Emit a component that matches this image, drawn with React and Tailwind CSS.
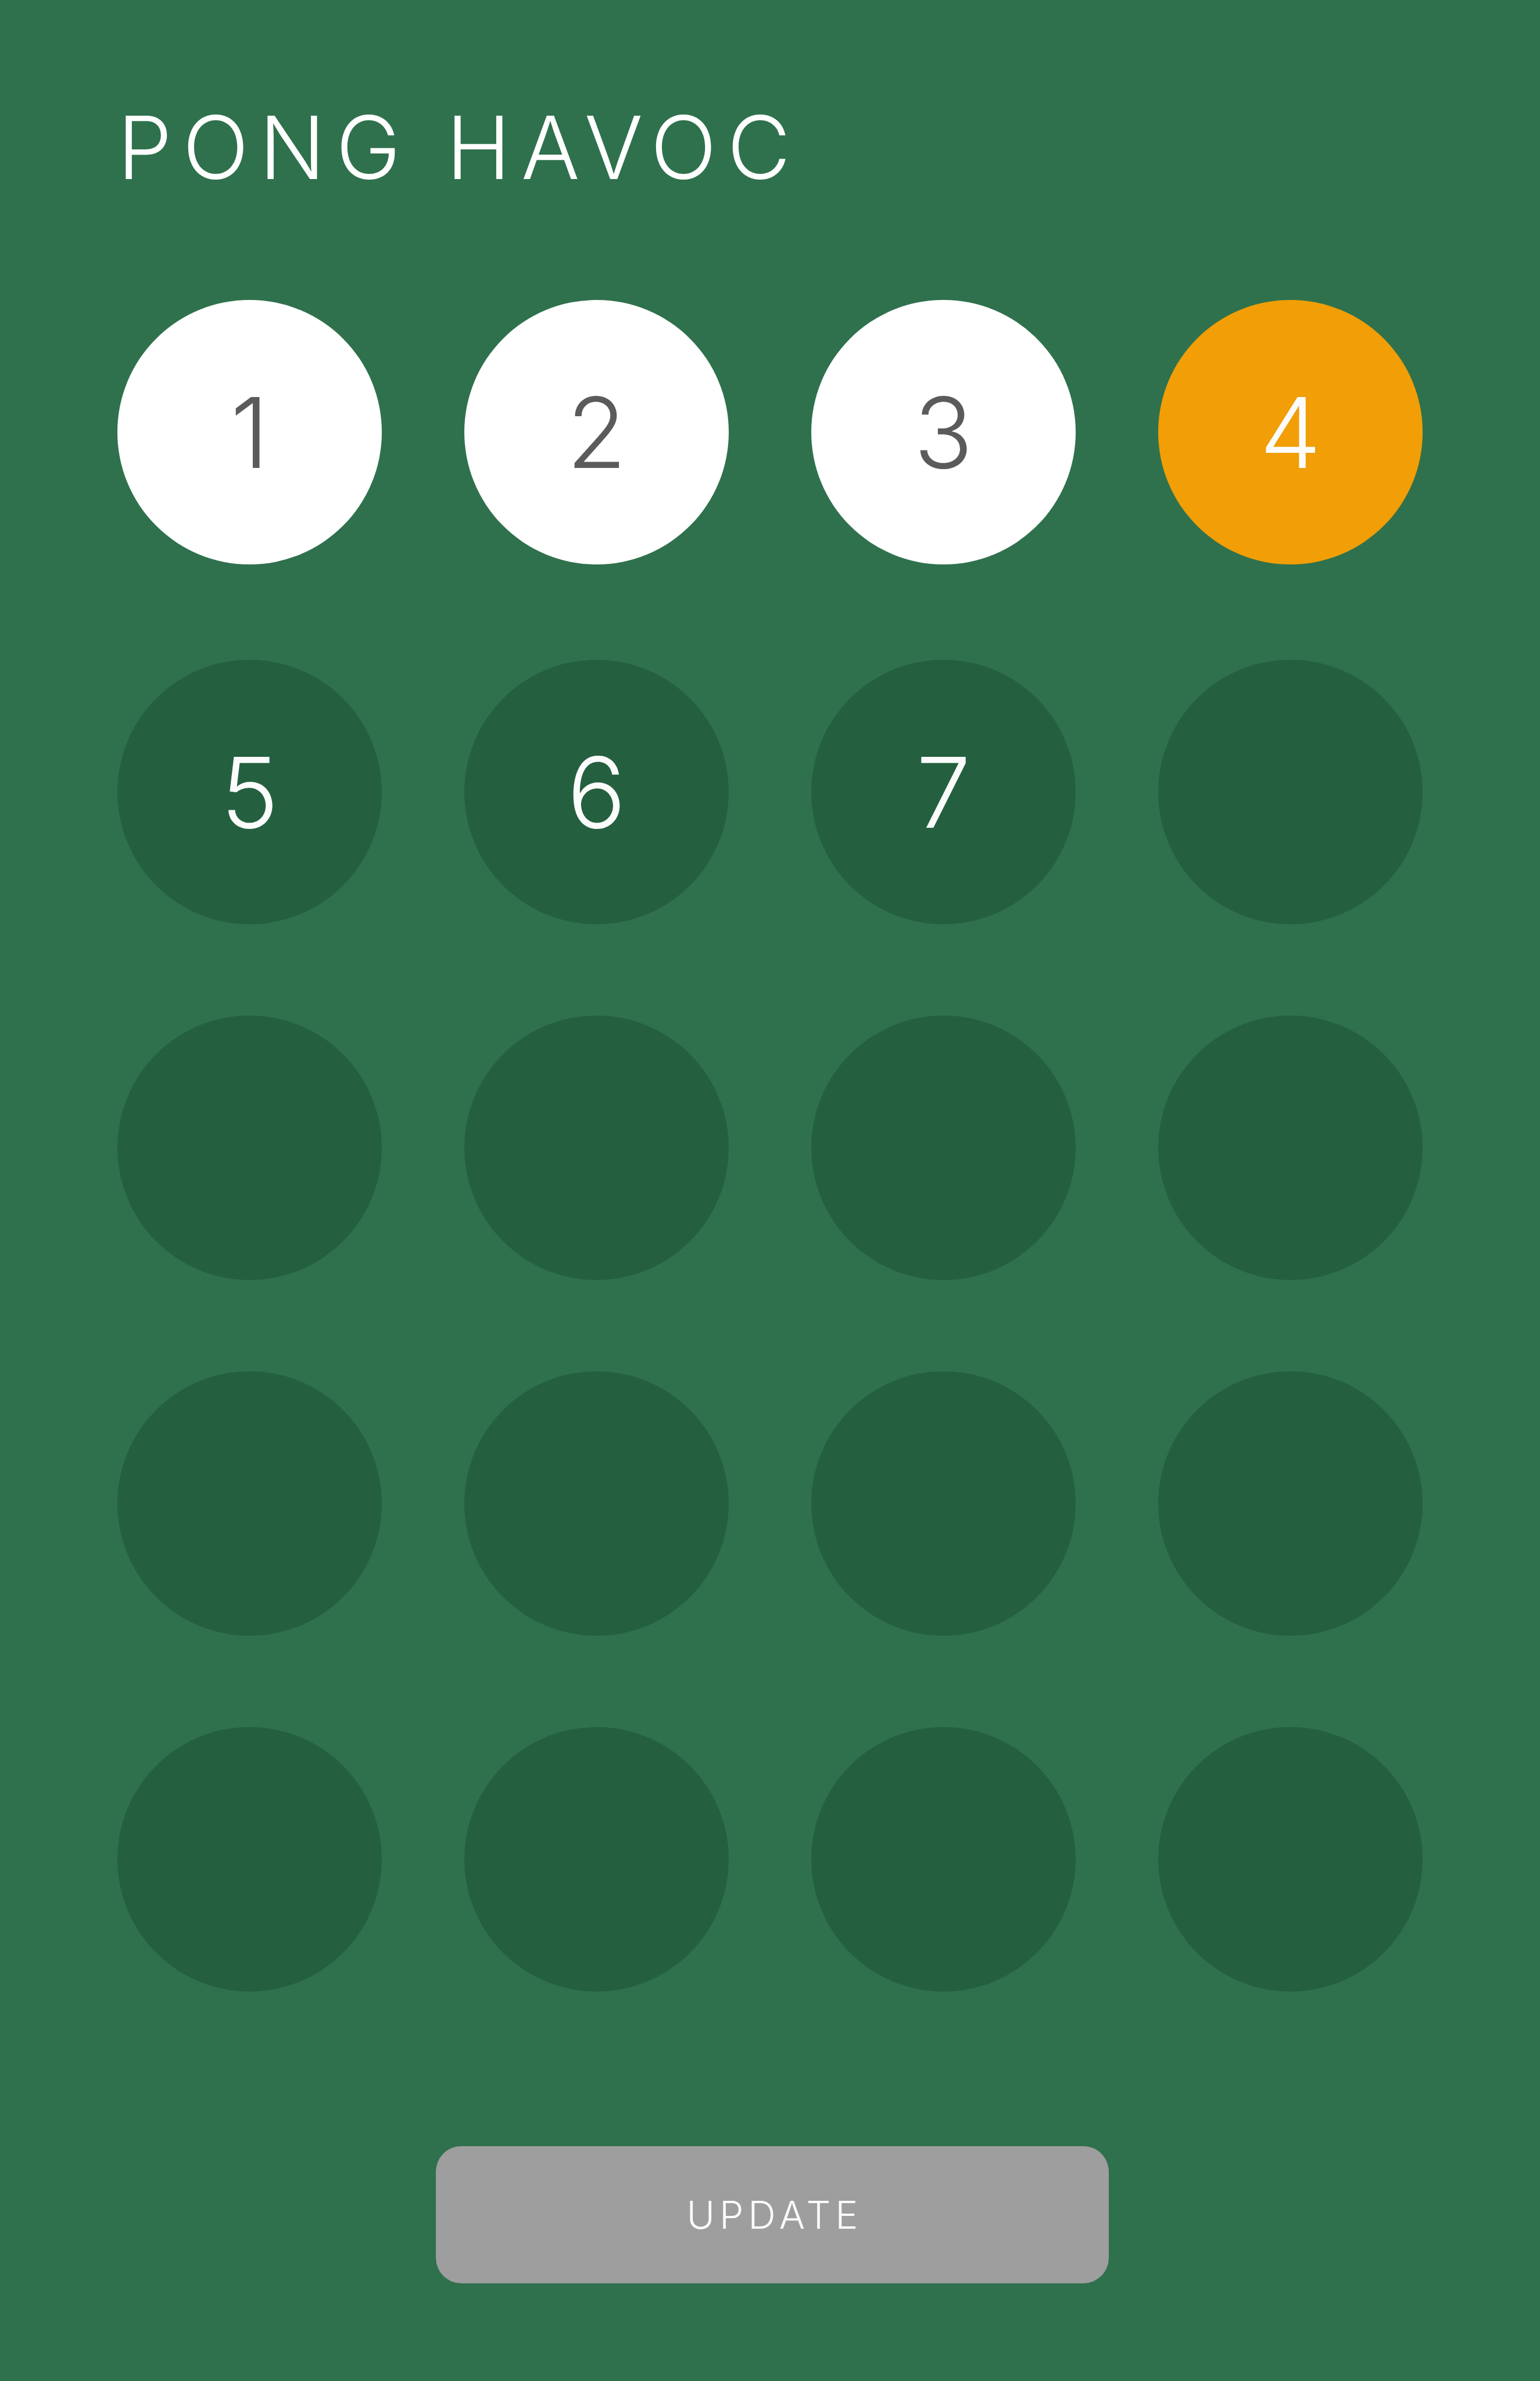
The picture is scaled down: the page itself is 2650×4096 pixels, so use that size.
const rows = [
  { gap: "", cells: [
    { label: "1", tone: "done" },
    { label: "2", tone: "done" },
    { label: "3", tone: "done" },
    { label: "4", tone: "active" },
  ] },
  { gap: "mt-[164px]", cells: [
    { label: "5", tone: "idle" },
    { label: "6", tone: "idle" },
    { label: "7", tone: "idle" },
    { label: "", tone: "idle" },
  ] },
  { gap: "mt-[157px]", cells: Array(4).fill({ label: "", tone: "idle" }) },
  { gap: "mt-[157px]", cells: Array(4).fill({ label: "", tone: "idle" }) },
  { gap: "mt-[157px]", cells: Array(4).fill({ label: "", tone: "idle" }) },
];

const tones = {
  done: "bg-white text-[#5b5b5b]",
  active: "bg-[#f19e07] text-[#fcfcfc]",
  idle: "bg-[#24603f] text-[#fcfcfc]",
};

function Cup({ label, tone, name }) {
  return (
    <button
      type="button"
      aria-label={name}
      className={`flex aspect-square items-center justify-center rounded-full text-[168px] leading-none ${tones[tone]}`}
    >
      {label}
    </button>
  );
}

export default function App() {
  return (
    <main className="flex min-h-screen flex-col bg-[#2f714d] px-[202px] pt-[174px] font-['Inter',sans-serif] font-light">
      <h1 className="text-[150px] leading-[160px] tracking-[0.12em] text-white">
        PONG HAVOC
      </h1>
      <section aria-label="Cups" className="mt-[182px]">
        {rows.map((row, r) => (
          <div key={r} className={`grid grid-cols-4 gap-x-[142px] ${row.gap}`}>
            {row.cells.map((cell, c) => (
              <Cup key={c} {...cell} name={`Cup ${r * 4 + c + 1}`} />
            ))}
          </div>
        ))}
      </section>
      <button
        type="button"
        className="mt-[266px] mr-[540px] ml-[548px] h-[236px] rounded-[44px] bg-[#9e9e9e] pl-2 text-[66px] leading-none tracking-[0.12em] text-[#fcfaff]"
      >
        UPDATE
      </button>
    </main>
  );
}
